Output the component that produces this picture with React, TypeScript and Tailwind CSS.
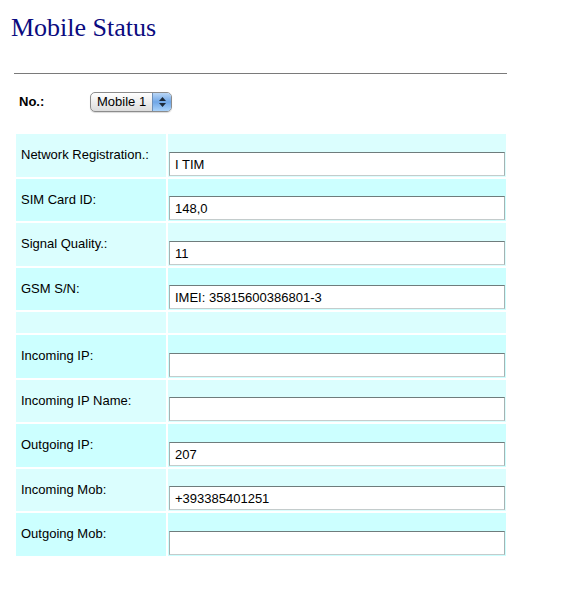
import React from "react";

type Row = {
  label: string;
  value: string;
  light: boolean;
};

const ROWS: Row[] = [
  { label: "Network Registration.:", value: "I TIM", light: true },
  { label: "SIM Card ID:", value: "148,0", light: false },
  { label: "Signal Quality.:", value: "11", light: true },
  { label: "GSM S/N:", value: "IMEI: 35815600386801-3", light: false },
];

const ROWS2: Row[] = [
  { label: "Incoming IP:", value: "", light: false },
  { label: "Incoming IP Name:", value: "", light: true },
  { label: "Outgoing IP:", value: "207", light: false },
  { label: "Incoming Mob:", value: "+393385401251", light: true },
  { label: "Outgoing Mob:", value: "", light: false },
];

function StatusRow({ row }: { row: Row }) {
  const bg = row.light ? "bg-[#dbfefe]" : "bg-[#ccffff]";
  return (
    <>
      <div className={`${bg} h-[42.5px] flex items-center pl-[5px] pb-[1px]`}>
        {row.label}
      </div>
      <div className={`${bg} h-[42.5px] flex flex-col justify-end pb-[1px] px-[1px]`}>
        <input
          readOnly
          value={row.value}
          className="h-[24px] w-full bg-white border border-t-[#6f7c7c] border-x-[#a6b2b2] border-b-[#c4cccc] px-[5px] pt-[1px] text-[13px] text-black outline-none"
          style={{ fontFamily: '"Liberation Sans", Arial, sans-serif' }}
        />
      </div>
    </>
  );
}

export default function App() {
  return (
    <div
      className="w-[572px] h-[589px] bg-white text-[13px] text-black"
      style={{ fontFamily: '"Liberation Sans", Arial, sans-serif' }}
    >
      {/* TITLE */}
      <h1
        className="pt-[15px] pl-[11px] text-[26px] leading-none text-[#0b0b80]"
        style={{ fontFamily: '"Liberation Serif", "Times New Roman", serif' }}
      >
        Mobile Status
      </h1>

      <div className="ml-[14px] w-[493px] mt-[32px] border-t border-[#7a7a7a]" />

      {/* SELECTOR */}
      <div className="flex items-center mt-[18px] h-[20px]">
        <span className="ml-[19px] w-[71px] font-bold">No.:</span>
        <div className="flex h-[20px] w-[82px] rounded-[5px] border border-[#8c8c8c] overflow-hidden bg-gradient-to-b from-white to-[#dcdcdc] shadow-[0_1px_1px_rgba(0,0,0,0.15)]">
          <span className="flex-1 pl-[6px] leading-[18px]">Mobile 1</span>
          <div className="w-[19px] flex flex-col items-center justify-center gap-[2px] border-l border-[#6d8fb8] bg-gradient-to-b from-[#b9d6f6] via-[#6fa6e6] to-[#a9d2fa]">
            <svg width="7" height="4" viewBox="0 0 7 4">
              <path d="M3.5 0 L7 4 L0 4 Z" fill="#1b2a3a" />
            </svg>
            <svg width="7" height="4" viewBox="0 0 7 4">
              <path d="M0 0 L7 0 L3.5 4 Z" fill="#1b2a3a" />
            </svg>
          </div>
        </div>
      </div>

      {/* TABLE */}
      <div className="ml-[16px] mt-[22px] w-[490px] grid grid-cols-[150px_1fr] gap-[2px]">
        {ROWS.map((r) => (
          <StatusRow key={r.label} row={r} />
        ))}
        <div className="bg-[#dbfefe] h-[21px]" />
        <div className="bg-[#dbfefe] h-[21px]" />
        {ROWS2.map((r) => (
          <StatusRow key={r.label} row={r} />
        ))}
      </div>
    </div>
  );
}
